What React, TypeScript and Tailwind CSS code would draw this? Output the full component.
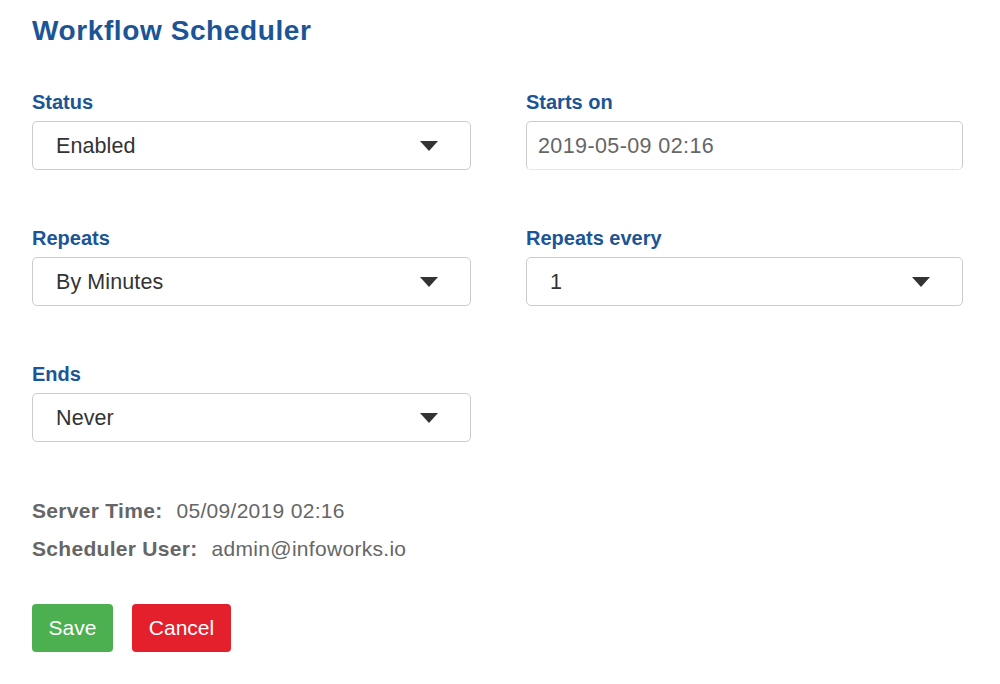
import React from "react";

const font = { fontFamily: '"Liberation Sans", Arial, Helvetica, sans-serif' };

function Arrow() {
  return (
    <svg width="18" height="10" viewBox="0 0 18 10" className="shrink-0">
      <path d="M0 0 L18 0 L9 10 Z" fill="#333333" />
    </svg>
  );
}

function SelectBox({ value }: { value: string }) {
  return (
    <div className="h-[49px] border border-[#cccccc] rounded-[5px] bg-white flex items-center justify-between pl-[23px] pr-[32px]">
      <span className="text-[21.5px] tracking-[0.1px] text-[#333333] leading-none mt-[3px]">{value}</span>
      <Arrow />
    </div>
  );
}

function Field({ label, children }: { label: string; children: React.ReactNode }) {
  return (
    <div className="flex flex-col">
      <div className="text-[20px] leading-[24px] font-bold text-[#1b5596] mb-[7px]">{label}</div>
      {children}
    </div>
  );
}

export default function App() {
  return (
    <div className="w-[1000px] h-[684px] bg-white px-[32px] pt-[15px]" style={font}>
      <h1 className="text-[28px] tracking-[0.6px] leading-[32px] font-bold text-[#1b5596]">Workflow Scheduler</h1>
      <div className="mt-[43px] grid grid-cols-[439px_437px] gap-x-[55px] gap-y-[56px]">
        <Field label="Status">
          <SelectBox value="Enabled" />
        </Field>
        <Field label="Starts on">
          <div className="h-[49px] border border-[#cccccc] rounded-[5px] bg-white flex items-center pl-[11px]" style={{ borderBottomStyle: "dotted" }}>
            <span className="text-[21.5px] tracking-[0.4px] text-[#666666] leading-none mt-[3px]">2019-05-09 02:16</span>
          </div>
        </Field>
        <Field label="Repeats">
          <SelectBox value="By Minutes" />
        </Field>
        <Field label="Repeats every">
          <SelectBox value="1" />
        </Field>
        <Field label="Ends">
          <SelectBox value="Never" />
        </Field>
      </div>
      <div className="mt-[55px] text-[21px] tracking-[0.3px] leading-[28px] text-[#666666]">
        <div className="flex">
          <span className="font-bold">Server Time:</span>
          <span className="ml-[14px]">05/09/2019 02:16</span>
        </div>
        <div className="flex mt-[10px]">
          <span className="font-bold">Scheduler User:</span>
          <span className="ml-[14px]">admin@infoworks.io</span>
        </div>
      </div>
      <div className="mt-[41px] flex gap-[19px]">
        <button className="w-[81px] h-[48px] rounded-[4px] bg-[#4caf50] text-white text-[21px]">Save</button>
        <button className="w-[99px] h-[48px] rounded-[4px] bg-[#e3202c] text-white text-[21px]">Cancel</button>
      </div>
    </div>
  );
}
